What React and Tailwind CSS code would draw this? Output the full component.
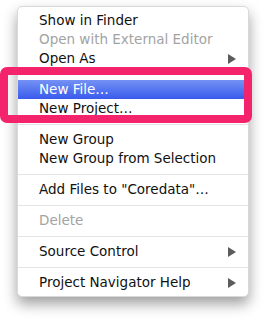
import React from 'react';

const ITEMS = [
  { label: 'Show in Finder' },
  { label: 'Open with External Editor', disabled: true },
  { label: 'Open As', submenu: true },
  { sep: true },
  { label: 'New File…', active: true },
  { label: 'New Project…' },
  { sep: true },
  { label: 'New Group' },
  { label: 'New Group from Selection' },
  { sep: true },
  { label: 'Add Files to "Coredata"…' },
  { sep: true },
  { label: 'Delete', disabled: true },
  { sep: true },
  { label: 'Source Control', submenu: true },
  { sep: true },
  { label: 'Project Navigator Help', submenu: true },
];

function Arrow() {
  return (
    <svg width="8" height="10" viewBox="0 0 8 10" className="shrink-0">
      <path d="M0 0 L8 5 L0 10 Z" fill="#5c5c5c" />
    </svg>
  );
}

export default function App() {
  return (
    <div
      className="relative h-[323px] w-[265px] overflow-hidden bg-white"
      style={{ fontFamily: '"DejaVu Sans", "Liberation Sans", sans-serif' }}
    >
      {/* context menu */}
      <div className="ml-[17px] mt-[6px] flex w-[232px] flex-col rounded-[5px] border border-[#d9d9d9] bg-white pt-[4px] pb-[4px] shadow-[0_7px_14px_rgba(0,0,0,0.38)]">
        {ITEMS.map((item, i) =>
          item.sep ? (
            <div key={i} className="flex h-[12px] items-center">
              <div className="h-px w-full bg-[#e3e3e3]" />
            </div>
          ) : (
            <div
              key={i}
              className={`flex h-[19px] items-center justify-between pl-[21px] pr-[12px] text-[13.5px] leading-none ${
                item.active
                  ? 'bg-gradient-to-b from-[#7591f4] to-[#3a59ec] text-white'
                  : item.disabled
                  ? 'text-[#a3a3a3]'
                  : 'text-[#111]'
              }`}
            >
              <span className="whitespace-nowrap">{item.label}</span>
              {item.submenu && <Arrow />}
            </div>
          )
        )}
      </div>

      {/* pink annotation box */}
      <div className="absolute left-0 top-[67px] h-[56px] w-[252px] rounded-[7px] border-[8px] border-[#f4246c]" />
    </div>
  );
}
